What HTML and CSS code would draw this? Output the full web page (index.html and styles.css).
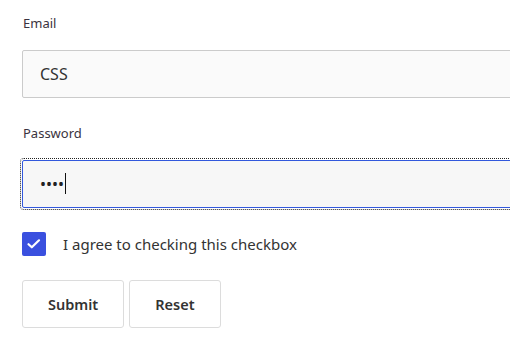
FILE: index.html
```html
<!DOCTYPE html>
<html lang="en">
<head>
<meta charset="utf-8">
<title>Form</title>
<link rel="stylesheet" href="styles.css">
</head>
<body>
<form class="form">
  <div class="field">
    <label class="field-label" for="email">Email</label>
    <input class="field-input" id="email" type="text" value="CSS">
  </div>
  <div class="field">
    <label class="field-label" for="password">Password</label>
    <div class="input-wrap">
      <input class="field-input is-focused" id="password" type="password" value="abcd">
      <span class="caret"></span>
    </div>
  </div>
  <label class="check-row">
    <span class="check-box">
      <svg width="24" height="24" viewBox="0 0 24 24"><path d="M6.5 12.2 L9.8 15.3 L17 8.3" fill="none" stroke="#fff" stroke-width="2.2" stroke-linecap="round" stroke-linejoin="round"/></svg>
    </span>
    <span class="check-text">I agree to checking this checkbox</span>
  </label>
  <div class="actions">
    <button type="button" class="btn">Submit</button>
    <button type="button" class="btn">Reset</button>
  </div>
</form>
</body>
</html>
```

FILE: styles.css
```css
html, body {
  margin: 0;
  padding: 0;
  overflow: hidden;
  background: #fff;
}

body {
  font-family: "Noto Sans", "Open Sans", sans-serif;
  color: #333;
}

.form {
  padding: 13px 0 0 22px;
  width: 540px;
}

.field {
  display: flex;
  flex-direction: column;
  margin-bottom: 25px;
}

.field + .field {
  margin-bottom: 24px;
}

.field-label {
  font-size: 13px;
  line-height: 20px;
  color: #3a3340;
  margin: 0 0 17px 1px;
}

.input-wrap {
  position: relative;
}

.field-input {
  box-sizing: border-box;
  width: 100%;
  height: 48px;
  margin: 0;
  padding: 0 17px;
  border: 1px solid #cbcbcb;
  border-radius: 2px;
  background: #fafafa;
  font-family: inherit;
  font-size: 16px;
  color: #333;
  outline: none;
  display: block;
}

.field-input.is-focused {
  border-color: #3258dc;
  background: #f7f7f7;
  outline: 1px dotted #222;
  outline-offset: 1px;
  color: #222;
}

.caret {
  position: absolute;
  left: 43px;
  top: 13px;
  width: 1px;
  height: 21px;
  background: #111;
}

.check-row {
  display: flex;
  align-items: center;
  gap: 17px;
  height: 24px;
  margin-bottom: 24px;
}

.check-box {
  width: 24px;
  height: 24px;
  border-radius: 2px;
  background: #3a50df;
  display: flex;
}

.check-text {
  font-size: 15px;
  line-height: 24px;
  color: #333;
}

.actions {
  display: flex;
  gap: 5px;
}

.btn {
  height: 48px;
  padding: 0 25px;
  border: 1px solid #dcdcdc;
  border-radius: 3px;
  background: #fff;
  font-family: inherit;
  font-size: 14.5px;
  font-weight: 600;
  color: #333;
  cursor: pointer;
}
```
